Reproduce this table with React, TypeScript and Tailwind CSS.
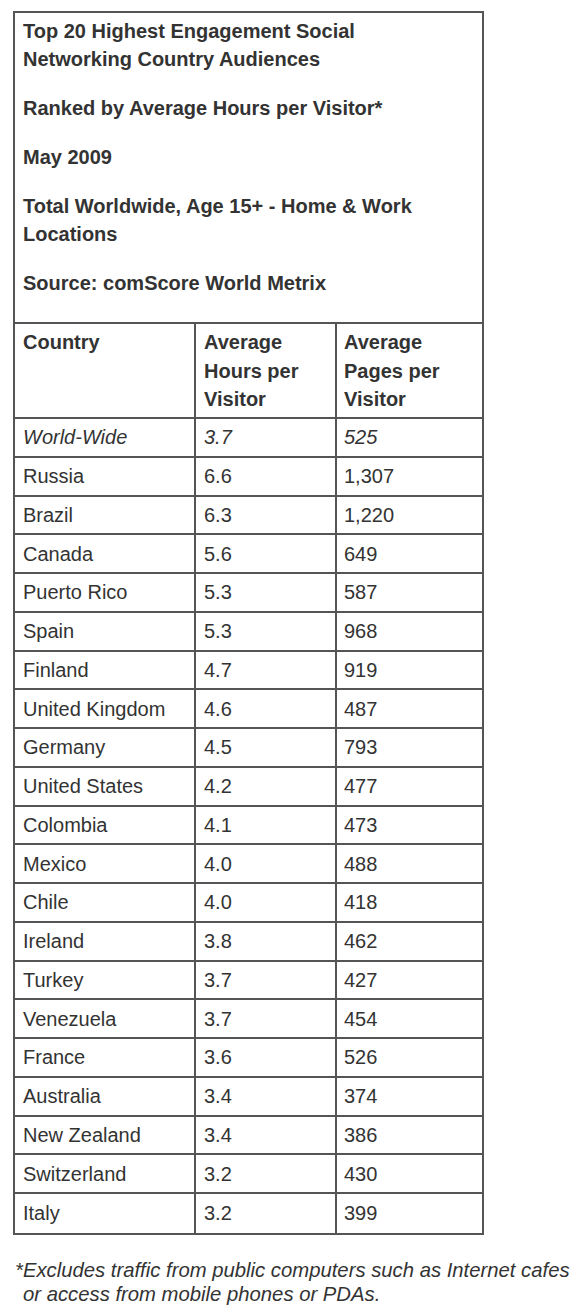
import React from "react";

const rows: [string, string, string][] = [
  ["Russia", "6.6", "1,307"],
  ["Brazil", "6.3", "1,220"],
  ["Canada", "5.6", "649"],
  ["Puerto Rico", "5.3", "587"],
  ["Spain", "5.3", "968"],
  ["Finland", "4.7", "919"],
  ["United Kingdom", "4.6", "487"],
  ["Germany", "4.5", "793"],
  ["United States", "4.2", "477"],
  ["Colombia", "4.1", "473"],
  ["Mexico", "4.0", "488"],
  ["Chile", "4.0", "418"],
  ["Ireland", "3.8", "462"],
  ["Turkey", "3.7", "427"],
  ["Venezuela", "3.7", "454"],
  ["France", "3.6", "526"],
  ["Australia", "3.4", "374"],
  ["New Zealand", "3.4", "386"],
  ["Switzerland", "3.2", "430"],
  ["Italy", "3.2", "399"],
];

function Row({ c, h, p, italic, last }: { c: string; h: string; p: string; italic?: boolean; last?: boolean }) {
  return (
    <div
      className={`grid grid-cols-[181px_141px_1fr] h-[38.76px] ${last ? "" : "border-b-2 border-[#555]"} ${italic ? "italic" : ""}`}
    >
      <div className="border-r-2 border-[#555] flex items-center pl-2">{c}</div>
      <div className="border-r-2 border-[#555] flex items-center pl-2">{h}</div>
      <div className="flex items-center pl-[7px]">{p}</div>
    </div>
  );
}

export default function App() {
  return (
    <div
      className="bg-white w-[585px] h-[1306px] overflow-hidden text-[#333] pt-[11px]"
      style={{ fontFamily: '"Liberation Sans", Arial, sans-serif' }}
    >
      <div className="ml-[13px] w-[471px] border-2 border-[#555] text-[20px]">
        <div className="border-b-2 border-[#555] pl-2 pt-[4px] pb-[25px] font-bold leading-[28px] flex flex-col gap-[21px]">
          <p>
            Top 20 Highest Engagement Social
            <br />
            Networking Country Audiences
          </p>
          <p>Ranked by Average Hours per Visitor*</p>
          <p>May 2009</p>
          <p>
            Total Worldwide, Age 15+ - Home &amp; Work
            <br />
            Locations
          </p>
          <p>Source: comScore World Metrix</p>
        </div>
        <div className="grid grid-cols-[181px_141px_1fr] border-b-2 border-[#555] font-bold leading-[28.5px] h-[95px]">
          <div className="border-r-2 border-[#555] pl-2 pt-[4px]">Country</div>
          <div className="border-r-2 border-[#555] pl-2 pt-[4px]">
            Average
            <br />
            Hours per
            <br />
            Visitor
          </div>
          <div className="pl-[7px] pt-[4px]">
            Average
            <br />
            Pages per
            <br />
            Visitor
          </div>
        </div>
        <Row c="World-Wide" h="3.7" p="525" italic />
        {rows.map((r, i) => (
          <Row key={r[0]} c={r[0]} h={r[1]} p={r[2]} last={i === rows.length - 1} />
        ))}
      </div>
      <div className="mt-[23px] italic text-[20.3px] leading-[24px]">
        <div className="ml-[15px] whitespace-nowrap">*Excludes traffic from public computers such as Internet cafes</div>
        <div className="ml-[23px] whitespace-nowrap">or access from mobile phones or PDAs.</div>
      </div>
    </div>
  );
}
